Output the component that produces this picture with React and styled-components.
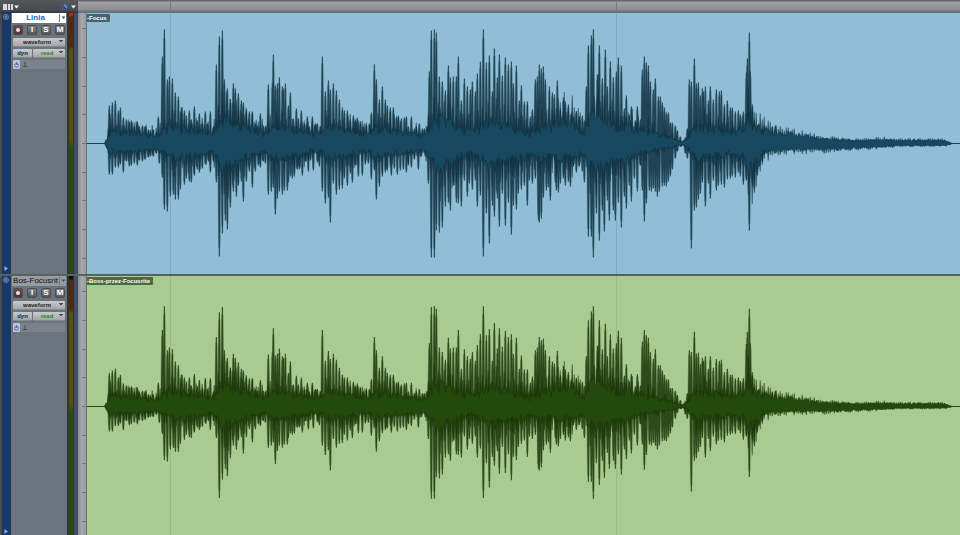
import React from 'react';
import styled, { createGlobalStyle } from 'styled-components';

const GlobalStyle = createGlobalStyle`
  * {
    box-sizing: border-box;
  }

  body {
    margin: 0;
    background: #4b4f55;
    font-family: 'Liberation Sans', Arial, sans-serif;
  }

  button,
  select {
    margin: 0;
    padding: 0;
    border: 0;
    font-family: inherit;
    cursor: pointer;
  }
`;

const Window = styled.main`
  display: flex;
  flex-direction: column;
  height: 100vh;
  overflow: hidden;
`;

const TopBar = styled.header`
  display: flex;
  flex: none;
  height: 13px;
`;

const ViewTools = styled.div`
  display: flex;
  align-items: center;
  justify-content: space-between;
  flex: none;
  width: 78px;
  padding: 0 2px 0 3px;
  background: linear-gradient(#54575b, #474a4f 80%, #2f3338);
`;

const ToolButton = styled.button`
  display: flex;
  align-items: center;
  height: 12px;
  background: none;
`;

const Ruler = styled.div`
  flex: 1;
  min-width: 0;
  background: linear-gradient(#68686a 0 1px, #a2a2a5 2px, #8c8d91 10px, #69737f 11px);
`;

const Track = styled.section`
  display: flex;
  flex: none;
  height: 263px;
  border-bottom: 2px solid #5a5f62;
`;

const ColorStrip = styled.div`
  display: flex;
  flex-direction: column;
  align-items: center;
  justify-content: space-between;
  flex: none;
  width: 11px;
  padding: 0 1px 2px 0;
  border-left: 2px solid #474c53;
  background: #17396a;
`;

const Controls = styled.div`
  display: flex;
  flex-direction: column;
  gap: 2px;
  flex: none;
  width: 56px;
  padding: 0 2px;
  background: #6b737c;
`;

const NameButton = styled.button`
  display: flex;
  align-items: center;
  height: 10px;
  margin: 0 -1px;
  background: ${({ $selected }) => ($selected ? '#ffffff' : '#989ba0')};
  color: ${({ $selected }) => ($selected ? '#2467c4' : '#101114')};
  font-size: 8px;
  font-weight: ${({ $selected }) => ($selected ? 700 : 400)};
  line-height: 10px;
  white-space: nowrap;
`;

const NameText = styled.span`
  flex: 1;
  min-width: 0;
  overflow: hidden;
`;

const NameArrow = styled.span`
  display: flex;
  justify-content: center;
  width: 7px;
  height: 8px;
  border-left: 1px solid #77797d;
`;

const ButtonRow = styled.div`
  display: flex;
  justify-content: space-between;
  padding-bottom: 1px;
`;

const RoundButton = styled.button`
  display: flex;
  align-items: center;
  justify-content: center;
  width: 10px;
  height: 10px;
  border: 1px solid #4a4d51;
  border-radius: 2px;
  background: ${({ $record }) =>
    $record ? 'linear-gradient(#6b4b4d, #4f3235)' : 'linear-gradient(#85878a, #54575b)'};
  color: #ffffff;
  font-size: 8px;
  font-weight: 700;
  line-height: 8px;
`;

const RecordDot = styled.span`
  width: 4px;
  height: 4px;
  border-radius: 50%;
  background: #f3dfdf;
`;

const DropDown = styled.select`
  appearance: none;
  flex: 1;
  min-width: 0;
  height: 9px;
  padding-right: 4px;
  border-bottom: 1px solid #85888c;
  border-radius: 1px;
  background: linear-gradient(to bottom left, #4a4c50 50%, transparent 0) right 4px top 2px / 2px 3px no-repeat,
    linear-gradient(to bottom right, #4a4c50 50%, transparent 0) right 2px top 2px / 2px 3px no-repeat,
    linear-gradient(#c9cacc, #a4a6a9);
  color: ${({ $active }) => ($active ? '#2c8526' : '#1d1f22')};
  font-size: 6px;
  font-weight: 700;
  line-height: 8px;
  text-align-last: center;
`;

const SmallButton = styled.button`
  width: 19px;
  height: 9px;
  border-bottom: 1px solid #85888c;
  border-radius: 1px;
  background: linear-gradient(#c9cacc, #a4a6a9);
  color: #1d1f22;
  font-size: 6px;
  font-weight: 700;
  line-height: 8px;
`;

const SplitRow = styled.div`
  display: flex;
  gap: 1px;
`;

const ElasticRow = styled.div`
  display: flex;
  align-items: center;
  gap: 2px;
  height: 9px;
  background: #7b828b;
`;

const ElasticButton = styled.button`
  display: flex;
  align-items: center;
  justify-content: center;
  width: 7px;
  height: 9px;
  border-radius: 1px;
  background: #b9c3db;
`;

const Meter = styled.div`
  flex: none;
  width: 7px;
  border: solid #2b3634;
  border-width: 0 1px 0 2px;
  background: linear-gradient(
    ${({ $clip }) => ($clip ? '#c8201c' : '#0d0d0d')} 0 3px,
    #57280f 4px 33px,
    #5c4d10 37px 128px,
    #264d10 136px
  );
`;

const MeterGap = styled.div`
  flex: none;
  width: 4px;
  background: #414d63;
`;

const Scale = styled.div`
  flex: none;
  width: 9px;
  border-right: 1px solid #6e7479;
  background: linear-gradient(to right, #8b8c91, #a9aaae 50%, #96989c);
`;

const Clip = styled.div`
  position: relative;
  flex: 1;
  min-width: 0;
  background: ${({ $color }) => $color};
`;

const ClipLabel = styled.span`
  position: absolute;
  top: 1px;
  left: 0;
  padding-right: 3px;
  border-radius: 0 1px 1px 0;
  background: ${({ $color }) => $color};
  color: #ffffff;
  font-size: 6px;
  font-weight: 700;
  line-height: 8px;
  white-space: nowrap;
`;

const Drawing = styled.svg`
  display: block;
  width: 100%;
  height: 100%;
`;

// peaks as "x,height" pairs, measured from the centre line
const parse = (text) => text.trim().split(/\s+/).map((p) => p.split(',').map(Number));

const upPeaks = parse(`
  109,38 112,41 115,43 118,33 120,36 123,26 126,24 129,22 131,23 134,17 137,22 139,17 142,18 145,17 148,14
  150,12 153,14 156,11 158,27 162,87 164,114 167,64 169,67 172,65 175,51 178,47 181,36 184,33 186,28 189,33
  191,24 194,37 197,23 199,30 202,21 205,32 207,20 210,32 213,17 216,79 219,107 222,113 224,64 227,55 230,44
  233,60 235,55 238,50 241,43 243,41 246,34 249,32 252,32 255,20 257,18 260,30 263,18 265,17 268,59 272,61
  273,89 275,58 277,60 279,66 282,57 283,55 285,60 288,38 290,51 293,25 296,35 298,25 301,33 304,20 307,27
  309,17 312,27 315,20 317,20 320,17 322,87 325,52 328,63 330,54 333,60 336,53 339,44 342,36 344,33 347,33
  350,24 353,28 355,24 357,26 360,21 363,17 366,19 369,20 371,31 374,79 376,64 379,44 382,57 385,44 387,38
  390,36 393,36 396,27 398,28 401,25 404,26 406,27 408,17 411,27 414,15 416,17 419,20 422,15 424,15 427,17
  429,72 431,113 434,114 436,111 439,67 442,62 445,53 448,78 450,66 453,67 456,67 458,87 461,43 464,65
  467,57 470,54 472,62 475,52 477,70 480,82 483,114 486,81 489,88 492,52 494,95 497,66 499,89 502,68 505,86
  508,79 511,82 513,60 516,78 519,43 521,58 524,42 527,42 530,27 532,34 535,64 537,67 539,79 541,75 543,77
  545,64 549,57 552,51 554,49 557,63 560,36 563,46 565,42 568,39 571,31 573,27 576,32 579,27 582,28 584,23
  586,57 588,98 591,108 593,114 597,69 599,98 602,65 605,94 607,57 610,82 613,66 616,72 618,86 621,78 624,35
  626,48 629,29 631,37 635,23 637,37 640,24 642,74 644,87 646,81 648,78 650,62 653,54 655,65 658,47 660,47
  662,41 664,36 666,31 668,31 670,21 672,21 675,18 677,13 680,7 683,3 685,6 687,15 689,64 691,62 694,85
  696,60 698,61 700,48 702,55 703,52 705,57 708,43 710,57 713,44 716,54 719,52 721,53 724,39 727,43 730,36
  732,36 735,32 738,33 740,29 743,32 746,71 747,85 749,111 750,72 752,39 754,23 757,18 759,18 762,15 764,18
  768,13 772,17 775,18
`);

const downPeaks = parse(`
  107,5 109,31 112,31 115,24 118,24 120,21 123,29 126,18 129,23 131,22 134,20 137,22 139,17 142,18 145,16
  148,14 150,13 153,13 156,10 159,20 162,34 164,66 167,68 170,53 173,51 175,56 178,56 180,46 184,41 186,35
  189,38 191,39 194,32 197,26 199,29 202,25 205,21 208,18 210,29 213,18 216,39 219,113 222,90 225,77 227,86
  230,64 233,48 236,53 238,42 241,38 243,58 246,38 249,28 252,44 255,28 258,22 260,24 263,18 265,20 268,51
  271,48 273,44 275,71 277,55 279,48 282,51 284,47 287,47 288,39 290,33 292,35 294,33 297,26 299,26 302,32
  305,18 308,28 310,17 313,27 317,19 319,23 322,48 325,60 328,54 330,79 333,40 336,51 339,46 342,45 344,35
  347,42 350,30 352,39 355,22 358,33 362,32 365,21 368,20 371,36 374,27 376,56 379,43 382,33 385,29 387,27
  391,32 394,25 397,31 400,27 403,26 406,29 408,22 411,24 414,16 418,26 421,13 425,13 428,40 431,114 434,114
  436,87 439,89 442,84 445,63 448,59 450,67 453,42 456,59 458,60 461,63 464,37 467,53 469,40 472,46 475,37
  477,63 480,52 483,113 486,70 489,100 492,62 494,73 497,55 499,83 502,50 505,82 508,59 511,91 513,62 516,66
  518,50 521,46 524,42 527,62 529,37 532,40 535,35 538,77 539,79 541,75 543,54 546,47 548,44 550,57 555,39
  556,47 558,49 560,40 563,35 565,42 568,38 570,43 573,23 576,29 579,23 582,28 584,39 588,93 591,93 593,114
  596,70 599,97 602,67 604,88 607,57 609,77 613,67 615,77 618,59 621,84 624,53 626,65 629,42 631,58 634,35
  637,48 640,22 642,47 644,78 646,60 649,47 651,48 653,45 655,48 657,53 659,48 662,43 664,42 666,43 668,38
  670,33 672,26 675,15 677,8 681,3 685,10 687,15 689,10 691,105 694,67 696,64 698,56 700,50 702,39 705,63
  708,40 710,55 713,37 716,47 718,42 721,41 724,44 727,36 730,35 732,33 735,34 738,29 740,33 743,41 746,37
  749,87 752,42 754,49 757,32 759,23 762,19 764,11
`);

const upBody = parse(`
  87,0 104,0 107,4 110,12 125,11 140,9 157,7 165,14 175,16 195,12 212,9 218,16 223,24 235,18 250,14 265,9
  275,17 290,14 310,9 320,9 328,15 345,13 369,8 376,15 400,11 425,7 430,18 440,23 450,20 463,12 472,12 482,15
  492,20 502,17 516,14 530,9 538,16 550,16 565,23 573,20 584,8 590,22 598,28 608,20 625,15 640,13 655,9
  672,5 682,1 688,5 695,14 710,15 730,11 744,12 748,24 752,18 757,15 765,12 778,11 790,9 805,7 820,5 835,4
  860,3 885,4 900,3 930,3 944,3 950,1 953,0 960,0
`);

const downBody = parse(`
  87,0 104,0 107,4 110,9 125,8 140,7 157,5 165,9 175,14 195,13 212,8 218,14 223,25 235,19 250,11 265,7
  275,15 290,13 310,8 320,7 328,14 345,12 369,7 376,12 400,9 425,6 430,14 440,24 450,20 463,12 472,10 482,14
  492,22 502,18 516,14 530,10 538,14 550,15 565,13 573,14 584,9 590,20 598,26 608,20 625,15 640,9 655,6
  672,3 682,1 688,4 695,14 710,14 730,10 744,12 748,26 752,28 757,18 765,8 778,7 790,6 805,6 820,6 840,5
  860,4 885,3 900,2 930,2 944,2 950,1 953,0 960,0
`);

const noise = (n) => {
  const v = Math.sin(n * 12.9898) * 43758.5453;
  return v - Math.floor(v);
};

const levelAt = (body, x) => {
  const i = Math.max(1, body.findIndex((p) => p[0] >= x));
  const [x0, y0] = body[i - 1];
  const [x1, y1] = body[i];
  return y0 + ((y1 - y0) * (x - x0)) / (x1 - x0);
};

const edge = (body, sign, scale, seed) => {
  const points = [];
  for (let x = 87; x <= 960; x += 1) {
    const level = levelAt(body, x) * scale;
    points.push([x, sign * level * (0.65 + noise(x + seed) * 0.75)]);
  }
  return points;
};

const bodyPath = (up, down) =>
  'M' +
  [...edge(upBody, -1, up, 3), ...edge(downBody, 1, down, 71).reverse()]
    .map(([x, y]) => `${x},${y.toFixed(1)}`)
    .join('L') +
  'Z';

const spikePath = (peaks, sign, scale) =>
  peaks
    .map(([x, h]) => {
      const y = sign * h * scale;
      return `M${x - 1.2},0L${x - 0.2},${y}H${x + 1}L${x + 1.8},0Z`;
    })
    .join('');

// softer flanks beside each spike
const flankPath = (peaks, sign, scale) =>
  peaks
    .map(([x, h]) => {
      const y = sign * h * scale;
      return `M${x - 1.8},0L${x - 0.8},${y * 0.92}H${x + 1.3}L${x + 2},0Z`;
    })
    .join('');

const fringePath = (body, sign, scale, seed) => {
  let d = '';
  for (let x = 106; x < 948; x += 2) {
    const level = levelAt(body, x) * scale;
    const reach = x > 770 ? 0.7 : 1.4;
    const h = level * (1.1 + noise(x * 3 + seed) * reach);
    d += `M${x - 1.4},0L${x - 0.2},${(sign * h).toFixed(1)}H${x + 0.6}L${x + 1.8},0Z`;
  }
  return d;
};

const GRID = [170, 616];
const TICKS = [-115, -86, -57, -29, 0, 29, 57, 86, 115];

function Waveform({ wave, name }) {
  const { up, down, fill, dark, grid } = wave;
  return (
    <Drawing viewBox="87 -130 873 261" preserveAspectRatio="none" role="img" aria-label={name}>
      {GRID.map((x) => (
        <path key={x} d={`M${x + 0.5},-130V131`} stroke={grid} />
      ))}
      <path d="M87,0.5H960" stroke={dark} strokeOpacity="0.7" />
      <g transform="translate(0 0.5)" fill={dark}>
        <g fillOpacity="0.35">
          <path d={flankPath(upPeaks, -1, up)} />
          <path d={flankPath(downPeaks, 1, down)} />
        </g>
        <g fillOpacity="0.78">
          <path d={spikePath(upPeaks, -1, up)} />
          <path d={spikePath(downPeaks, 1, down)} />
          <path d={fringePath(upBody, -1, up, 5)} />
          <path d={fringePath(downBody, 1, down, 29)} />
        </g>
        <path d={bodyPath(up, down)} fill={fill} stroke={dark} strokeWidth="0.4" />
      </g>
    </Drawing>
  );
}

function Arrow() {
  return (
    <svg width="5" height="8" viewBox="0 0 5 8" aria-hidden="true">
      <path d="M0.5 2.5h4L2.5 5z" fill="#4a4c50" />
    </svg>
  );
}

function TrackRow({ track }) {
  const { name, clip, selected, wave } = track;
  return (
    <Track aria-label={name}>
      <ColorStrip>
        <svg width="8" height="8" viewBox="0 0 8 8" aria-hidden="true">
          <circle cx="4" cy="4" r="2.5" fill="#36567f" stroke="#6b84a6" />
          <path d="M2.8 3.4h2.4L4 5z" fill="#9fb3cc" />
        </svg>
        <svg width="6" height="7" viewBox="0 0 6 7" aria-hidden="true">
          <path d="M1.5 1L5 3.5L1.5 6z" fill="#8eb0d6" />
        </svg>
      </ColorStrip>

      <Controls>
        <NameButton $selected={selected}>
          <NameText>{name}</NameText>
          <NameArrow><Arrow /></NameArrow>
        </NameButton>
        <ButtonRow>
          <RoundButton $record aria-label="Record"><RecordDot /></RoundButton>
          <RoundButton>I</RoundButton>
          <RoundButton>S</RoundButton>
          <RoundButton>M</RoundButton>
        </ButtonRow>
        <SplitRow>
          <DropDown aria-label="Track view" defaultValue="waveform">
            <option>waveform</option>
          </DropDown>
        </SplitRow>
        <SplitRow>
          <SmallButton>dyn</SmallButton>
          <DropDown $active aria-label="Automation mode" defaultValue="read">
            <option>read</option>
          </DropDown>
        </SplitRow>
        <ElasticRow>
          <ElasticButton aria-label="Timebase">
            <svg width="7" height="8" viewBox="0 0 7 8" aria-hidden="true">
              <circle cx="3.5" cy="4.3" r="1.8" fill="#dfe6f5" stroke="#3c5ba6" />
              <path d="M3.5 1v3.3" stroke="#3c5ba6" strokeWidth="0.8" />
            </svg>
          </ElasticButton>
          <svg width="6" height="7" viewBox="0 0 6 7" aria-hidden="true">
            <path d="M3 1v4.5M1 5.5h4" stroke="#474b50" fill="none" />
          </svg>
        </ElasticRow>
      </Controls>

      <Meter $clip={selected} />
      <MeterGap />
      <Scale>
        <Drawing viewBox="0 -130 8 261" preserveAspectRatio="none" aria-hidden="true">
          {TICKS.map((y) => (
            <path key={y} d={`M4,${y + 0.5}H8`} stroke="#75777b" />
          ))}
        </Drawing>
      </Scale>

      <Clip $color={wave.background}>
        <Waveform wave={wave} name={clip} />
        <ClipLabel $color={wave.label}>{clip}</ClipLabel>
      </Clip>
    </Track>
  );
}

const tracks = [
  {
    name: 'Linia',
    clip: '-Focus',
    selected: true,
    wave: {
      up: 1,
      down: 1,
      background: '#8fbed6',
      fill: '#17485f',
      dark: '#0f303f',
      grid: '#7eabc1',
      label: '#476370',
    },
  },
  {
    name: 'Bos-Focusrit',
    clip: '-Boss-przez-Focusrite',
    selected: false,
    wave: {
      up: 0.88,
      down: 0.81,
      background: '#a8cb91',
      fill: '#24490d',
      dark: '#183407',
      grid: '#98ba82',
      label: '#50683f',
    },
  },
];

export default function App() {
  return (
    <>
      <GlobalStyle />
      <Window>
        <TopBar>
          <ViewTools>
            <ToolButton aria-label="Edit window view">
              <svg width="16" height="10" viewBox="0 0 16 10" aria-hidden="true">
                <rect x="0" y="2" width="10" height="6" fill="#d9dadb" />
                <path d="M4.5 2v6M7.5 2v6" stroke="#5b5d60" />
                <path d="M11 3.5h5L13.5 6.5z" fill="#ffffff" />
              </svg>
            </ToolButton>
            <ToolButton aria-label="Timeline options">
              <svg width="15" height="10" viewBox="0 0 15 10" aria-hidden="true">
                <circle cx="4" cy="5" r="2.5" fill="#243f72" stroke="#4a6ca8" />
                <path d="M4 2.5V5h2" stroke="#8fb0e0" fill="none" />
                <path d="M10 3.5h5L12.5 6.5z" fill="#ffffff" />
              </svg>
            </ToolButton>
          </ViewTools>
          <Ruler>
            <Drawing viewBox="78 0 882 13" preserveAspectRatio="none" aria-hidden="true">
              {GRID.map((x) => (
                <path key={x} d={`M${x + 0.5},2V13`} stroke="#77797d" />
              ))}
            </Drawing>
          </Ruler>
        </TopBar>
        {tracks.map((track) => (
          <TrackRow key={track.name} track={track} />
        ))}
      </Window>
    </>
  );
}
